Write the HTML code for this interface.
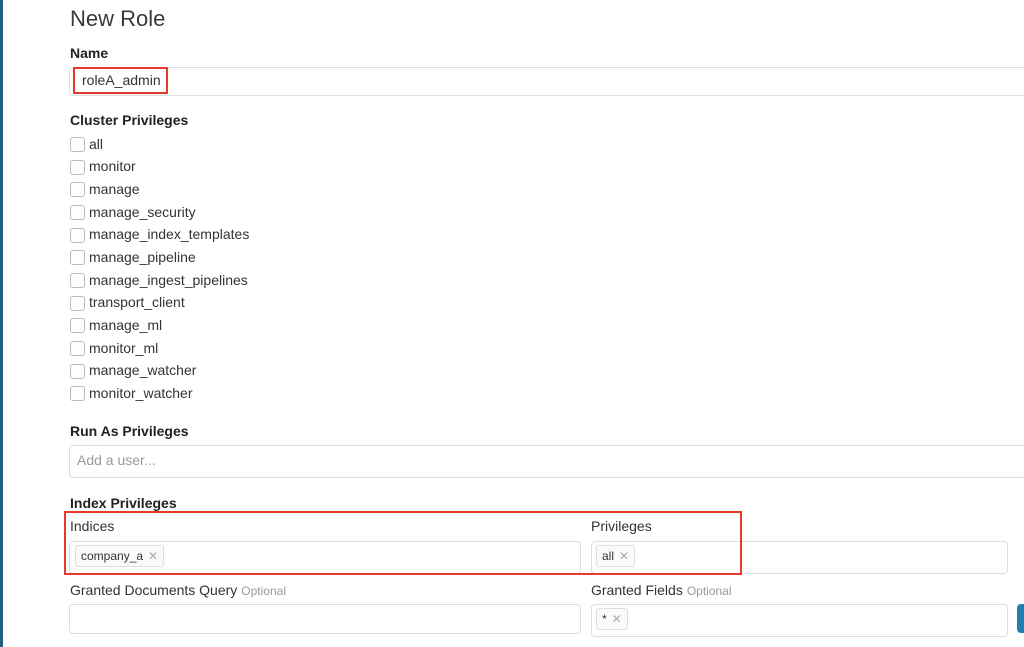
<!DOCTYPE html>
<html><head><meta charset="utf-8"><style>
*{box-sizing:border-box;margin:0;padding:0}
body{width:1024px;height:647px;overflow:hidden;background:#fff;font-family:"Liberation Sans",sans-serif;color:#333;position:relative}
.a{position:absolute}
.bar{left:0;top:0;width:3px;height:647px;background:#1f5f7f}
h1{position:absolute;left:70px;top:6px;font-size:22px;font-weight:normal;color:#3a3a3a}
.lb{position:absolute;left:70px;font-size:14px;font-weight:bold;color:#222}
.lt{position:absolute;font-size:14px;color:#333}
.opt{font-size:12px;color:#999;margin-left:4px}
.in{position:absolute;border:1px solid #ddd;border-radius:4px;background:#fff}
.cb{position:absolute;left:70px;width:15px;height:15px;border:1px solid #bbb;border-radius:3px}
.ct{position:absolute;left:89px;font-size:14px;color:#333}
.tag{position:absolute;border:1px solid #ddd;border-radius:3px;font-size:12px;color:#333;padding:3px 5px;background:#fafafa}
.tag span{color:#aaa;margin-left:5px}
.red{position:absolute;border:2px solid #e8392f}
</style></head><body>
<div class="a bar"></div>
<h1>New Role</h1>
<div class="lb" style="top:45px">Name</div>
<div class="in" style="left:69px;top:67px;width:970px;height:29px"></div>
<div class="lt" style="left:82px;top:72px">roleA_admin</div>
<div class="red" style="left:73px;top:67px;width:95px;height:27px"></div>
<div class="lb" style="top:112px">Cluster Privileges</div>

<div class="cb" style="top:137px"></div><div class="ct" style="top:136px">all</div>
<div class="cb" style="top:160px"></div><div class="ct" style="top:158px">monitor</div>
<div class="cb" style="top:182px"></div><div class="ct" style="top:181px">manage</div>
<div class="cb" style="top:205px"></div><div class="ct" style="top:204px">manage_security</div>
<div class="cb" style="top:228px"></div><div class="ct" style="top:226px">manage_index_templates</div>
<div class="cb" style="top:250px"></div><div class="ct" style="top:249px">manage_pipeline</div>
<div class="cb" style="top:273px"></div><div class="ct" style="top:272px">manage_ingest_pipelines</div>
<div class="cb" style="top:296px"></div><div class="ct" style="top:294px">transport_client</div>
<div class="cb" style="top:318px"></div><div class="ct" style="top:317px">manage_ml</div>
<div class="cb" style="top:341px"></div><div class="ct" style="top:340px">monitor_ml</div>
<div class="cb" style="top:364px"></div><div class="ct" style="top:362px">manage_watcher</div>
<div class="cb" style="top:386px"></div><div class="ct" style="top:385px">monitor_watcher</div>

<div class="lb" style="top:423px">Run As Privileges</div>
<div class="in" style="left:69px;top:445px;width:970px;height:33px"></div>
<div class="lt" style="left:77px;top:452px;color:#999">Add a user...</div>

<div class="lb" style="top:495px">Index Privileges</div>
<div class="lt" style="left:70px;top:518px">Indices</div>
<div class="in" style="left:69px;top:541px;width:512px;height:33px"></div>
<div class="tag" style="left:75px;top:545px">company_a<span>✕</span></div>
<div class="lt" style="left:591px;top:518px">Privileges</div>
<div class="in" style="left:591px;top:541px;width:417px;height:33px"></div>
<div class="tag" style="left:596px;top:545px">all<span>✕</span></div>
<div class="red" style="left:64px;top:511px;width:678px;height:64px"></div>

<div class="lt" style="left:70px;top:582px">Granted Documents Query<span class="opt">Optional</span></div>
<div class="in" style="left:69px;top:604px;width:512px;height:30px"></div>
<div class="lt" style="left:591px;top:582px">Granted Fields<span class="opt">Optional</span></div>
<div class="in" style="left:591px;top:604px;width:417px;height:33px"></div>
<div class="tag" style="left:596px;top:608px">*<span>✕</span></div>
<div class="a" style="left:1017px;top:604px;width:20px;height:29px;background:#1f7fae;border-radius:4px"></div>
</body></html>
